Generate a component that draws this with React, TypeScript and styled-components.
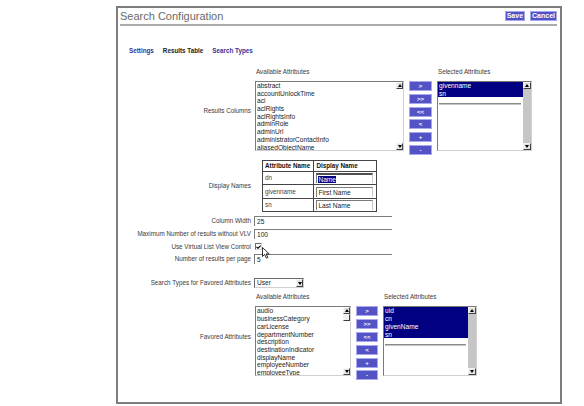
import styled, { createGlobalStyle } from "styled-components";

const GlobalStyle = createGlobalStyle`
  html, body {
    margin: 0;
    padding: 0;
    background: #fff;
  }
  body {
    font-family: "Liberation Sans", Arial, sans-serif;
    color: #333;
  }
`;

const availableColumns = [
  "abstract",
  "accountUnlockTime",
  "aci",
  "aclRights",
  "aclRightsInfo",
  "adminRole",
  "adminUrl",
  "administratorContactInfo",
  "aliasedObjectName",
];
const selectedColumns = ["givenname", "sn"];

const availableFavored = [
  "audio",
  "businessCategory",
  "carLicense",
  "departmentNumber",
  "description",
  "destinationIndicator",
  "displayName",
  "employeeNumber",
  "employeeType",
];
const selectedFavored = ["uid", "cn", "givenName", "sn"];

const displayNames = [
  { attr: "dn", name: "Name", focused: true },
  { attr: "givenname", name: "First Name" },
  { attr: "sn", name: "Last Name" },
];

const moveButtons = [">", ">>", "<<", "<", "+", "-"];

const Panel = styled.div`
  box-sizing: border-box;
  width: 446px;
  height: 398px;
  margin: 6px 0 0 116px;
  border: 2px solid #7d7d7d;
  display: flex;
  flex-direction: column;
`;

const Header = styled.div`
  display: flex;
  justify-content: space-between;
  align-items: flex-start;
  margin: 0 3px 0 2px;
  padding: 1px 0;
  border-bottom: 2px solid #ababab;
`;

const Title = styled.h1`
  margin: 0;
  font-size: 11px;
  line-height: 14px;
  font-weight: normal;
  color: #6a6a6a;
`;

const HeaderButtons = styled.div`
  display: flex;
  gap: 5px;
  margin-top: 2px;
`;

const ActionButton = styled.button`
  box-sizing: border-box;
  height: 10px;
  padding: 0 1px;
  font: bold 7px/8px "Liberation Sans", Arial, sans-serif;
  color: #fff;
  background: #5151c6;
  border: 1px solid #a6a6f2;
`;

const Tabs = styled.nav`
  display: flex;
  gap: 9px;
  margin: 21px 0 0 11px;
`;

const Tab = styled.span<{ $current?: boolean }>`
  font: bold 6.3px/8px "Liberation Sans", Arial, sans-serif;
  color: ${(p) => (p.$current ? "#222" : "#333399")};
`;

const Form = styled.div`
  display: flex;
  flex-direction: column;
`;

const Row = styled.div<{ $mt: number }>`
  display: grid;
  grid-template-columns: 133px 1fr;
  column-gap: 3px;
  margin-top: ${(p) => p.$mt}px;
`;

const Label = styled.div`
  align-self: center;
  text-align: right;
  font-size: 6.3px;
  line-height: 8px;
  color: #3a3a3a;
  white-space: nowrap;
`;

const Picker = styled.div<{ $cols: string }>`
  display: grid;
  grid-template-columns: ${(p) => p.$cols};
  grid-template-rows: 8px auto;
  column-gap: 5px;
  row-gap: 5px;
  margin-left: 1px;
  align-items: start;
`;

const Caption = styled.div`
  font-size: 6.3px;
  line-height: 8px;
  color: #3a3a3a;
  padding-left: 1px;
  white-space: nowrap;
`;

const ListBox = styled.div`
  box-sizing: border-box;
  height: 70px;
  display: flex;
  border: 1px solid;
  border-color: #7a7a7a #d0d0d0 #d0d0d0 #7a7a7a;
  background: #fff;
`;

const Options = styled.div`
  flex: 1;
  min-width: 0;
  overflow: hidden;
`;

const Option = styled.div<{ $selected?: boolean }>`
  font-size: 6.6px;
  line-height: 7.7px;
  height: 7.7px;
  padding-left: 1px;
  white-space: nowrap;
  background: ${(p) => (p.$selected ? "#000080" : "transparent")};
  color: ${(p) => (p.$selected ? "#fff" : "#222")};
`;

const Separator = styled.div`
  margin: 6px 2px 0 1px;
  border-top: 1px solid #8c8c8c;
  border-bottom: 1px solid #c4c4c4;
`;

const ScrollBar = styled.div<{ $track: string; $width: number }>`
  width: ${(p) => p.$width}px;
  display: flex;
  flex-direction: column;
  justify-content: space-between;
  background: ${(p) => p.$track};
`;

const ScrollArrow = styled.div`
  box-sizing: border-box;
  height: 7px;
  display: flex;
  align-items: center;
  justify-content: center;
  background: #e4e4e4;
  border: 1px solid;
  border-color: #f4f4f4 #404040 #404040 #f4f4f4;
`;

const Thumb = styled.div`
  box-sizing: border-box;
  height: 7px;
  background: #f0f0f0;
  border: 1px solid;
  border-color: #f4f4f4 #404040 #404040 #f4f4f4;
`;

const TrackTop = styled.div`
  display: flex;
  flex-direction: column;
`;

const MoveColumn = styled.div`
  display: flex;
  flex-direction: column;
  gap: 2.8px;
`;

const MoveButton = styled.button`
  box-sizing: border-box;
  height: 10px;
  padding: 0;
  font: bold 6px/8px "Liberation Sans", Arial, sans-serif;
  color: #fff;
  background: #5353c6;
  border: 1px solid #a8a8f0;
`;

const NamesTable = styled.table`
  border-collapse: collapse;
  margin-left: 8px;
  width: 115px;
  border: 1.5px solid #454545;
`;

const HeadCell = styled.th`
  height: 10px;
  padding: 0 2px;
  border: 1px solid #454545;
  text-align: left;
  font: bold 6.3px/8px "Liberation Sans", Arial, sans-serif;
  color: #111;
  white-space: nowrap;
`;

const Cell = styled.td`
  height: 12.5px;
  padding: 0 1px 0 2px;
  border: 1px solid #454545;
  font-size: 6.3px;
  line-height: 8px;
  color: #444;
`;

const NameInput = styled.div<{ $focused?: boolean }>`
  box-sizing: border-box;
  width: 57px;
  height: 10px;
  padding-left: 1px;
  font-size: 6.6px;
  line-height: 9px;
  color: #222;
  border-top: ${(p) => (p.$focused ? "2px solid #505050" : "1px solid #7a7a7a")};
  border-left: 1px solid #7a7a7a;
  border-right: 1px solid #c8c8c8;
  white-space: nowrap;
`;

const Highlight = styled.span`
  background: #000080;
  color: #fff;
`;

const TextField = styled.div`
  box-sizing: border-box;
  width: 138px;
  height: 10px;
  padding-left: 2px;
  font-size: 6.6px;
  line-height: 10px;
  color: #222;
  border-top: 1px solid #7d7d7d;
  border-left: 1px solid #7d7d7d;
`;

const CheckWrap = styled.div`
  position: relative;
  width: 8px;
  height: 9px;
  margin-left: 1px;
`;

const CheckBox = styled.div`
  box-sizing: border-box;
  width: 7px;
  height: 7px;
  margin-top: 1px;
  border-top: 1px solid #6a6a6a;
  border-left: 1px solid #6a6a6a;
  border-right: 1px solid #dadada;
  border-bottom: 1px solid #dadada;
  display: flex;
  align-items: center;
  justify-content: center;
`;

const Pointer = styled.svg`
  position: absolute;
  left: 7px;
  top: 5px;
`;

const Select = styled.div`
  box-sizing: border-box;
  width: 50px;
  height: 10px;
  display: flex;
  align-items: stretch;
  border-top: 1px solid #6a6a6a;
  border-left: 1px solid #6a6a6a;
  border-right: 1px solid #d0d0d0;
  border-bottom: 1px solid #d0d0d0;
`;

const SelectValue = styled.div`
  flex: 1;
  padding-left: 2px;
  font-size: 6.6px;
  line-height: 8px;
  color: #222;
`;

const DropButton = styled.div`
  box-sizing: border-box;
  width: 7px;
  display: flex;
  align-items: center;
  justify-content: center;
  background: #e4e4e4;
  border: 1px solid;
  border-color: #f4f4f4 #404040 #404040 #f4f4f4;
`;

const Glyph = ({ dir }: { dir: "up" | "down" }) => (
  <svg width="4" height="3" viewBox="0 0 4 3">
    <polygon points={dir === "up" ? "2,0 4,3 0,3" : "0,0 4,0 2,3"} fill="#000" />
  </svg>
);

type ListProps = {
  items: string[];
  selected?: boolean;
  track: string;
  barWidth: number;
  thumb?: boolean;
};

const List = ({ items, selected, track, barWidth, thumb }: ListProps) => (
  <ListBox>
    <Options>
      {items.map((item) => (
        <Option key={item} $selected={selected}>
          {item}
        </Option>
      ))}
      {selected && <Separator />}
    </Options>
    <ScrollBar $track={track} $width={barWidth}>
      <TrackTop>
        <ScrollArrow>
          <Glyph dir="up" />
        </ScrollArrow>
        {thumb && <Thumb />}
      </TrackTop>
      <ScrollArrow>
        <Glyph dir="down" />
      </ScrollArrow>
    </ScrollBar>
  </ListBox>
);

type AttributePickerProps = {
  cols: string;
  available: string[];
  selected: string[];
  thumb?: boolean;
};

const AttributePicker = ({ cols, available, selected, thumb }: AttributePickerProps) => (
  <Picker $cols={cols}>
    <Caption>Available Attributes</Caption>
    <span />
    <Caption>Selected Attributes</Caption>
    <List items={available} track="#fff" barWidth={7} thumb={thumb} />
    <MoveColumn>
      {moveButtons.map((b) => (
        <MoveButton key={b}>{b}</MoveButton>
      ))}
    </MoveColumn>
    <List items={selected} selected track="#c6c6c6" barWidth={8} />
  </Picker>
);

export default function App() {
  return (
    <>
      <GlobalStyle />
      <Panel>
        <Header>
          <Title>Search Configuration</Title>
          <HeaderButtons>
            <ActionButton>Save</ActionButton>
            <ActionButton>Cancel</ActionButton>
          </HeaderButtons>
        </Header>

        <Tabs>
          <Tab>Settings</Tab>
          <Tab $current>Results Table</Tab>
          <Tab>Search Types</Tab>
        </Tabs>

        <Form>
          <Row $mt={13}>
            <Label>Results Columns</Label>
            <AttributePicker
              cols="149px 23px 95px"
              available={availableColumns}
              selected={selectedColumns}
            />
          </Row>

          <Row $mt={5}>
            <Label>Display Names</Label>
            <div>
              <NamesTable>
                <thead>
                  <tr>
                    <HeadCell>Attribute Name</HeadCell>
                    <HeadCell>Display Name</HeadCell>
                  </tr>
                </thead>
                <tbody>
                  {displayNames.map((d) => (
                    <tr key={d.attr}>
                      <Cell>{d.attr}</Cell>
                      <Cell>
                        <NameInput $focused={d.focused}>
                          {d.focused ? <Highlight>{d.name}</Highlight> : d.name}
                        </NameInput>
                      </Cell>
                    </tr>
                  ))}
                </tbody>
              </NamesTable>
            </div>
          </Row>

          <Row $mt={4}>
            <Label>Column Width</Label>
            <TextField>25</TextField>
          </Row>
          <Row $mt={3}>
            <Label>Maximum Number of results without VLV</Label>
            <TextField>100</TextField>
          </Row>
          <Row $mt={3}>
            <Label>Use Virtual List View Control</Label>
            <CheckWrap>
              <CheckBox>
                <svg width="5" height="4" viewBox="0 0 5 4">
                  <polyline points="0.5,1.8 2,3.3 4.6,0.5" fill="none" stroke="#000" strokeWidth="1.1" />
                </svg>
              </CheckBox>
              <Pointer width="8" height="12" viewBox="0 0 8 12">
                <path
                  d="M0.5 0.5 L0.5 9.5 L2.7 7.4 L4.4 11.2 L5.9 10.5 L4.2 6.9 L7.2 6.9 Z"
                  fill="#fff"
                  stroke="#000"
                  strokeWidth="0.8"
                  strokeLinejoin="round"
                />
              </Pointer>
            </CheckWrap>
          </Row>
          <Row $mt={3}>
            <Label>Number of results per page</Label>
            <TextField>5</TextField>
          </Row>

          <Row $mt={14}>
            <Label>Search Types for Favored Attributes</Label>
            <Select>
              <SelectValue>User</SelectValue>
              <DropButton>
                <Glyph dir="down" />
              </DropButton>
            </Select>
          </Row>

          <Row $mt={5}>
            <Label>Favored Attributes</Label>
            <AttributePicker
              cols="96px 22px 94px"
              available={availableFavored}
              selected={selectedFavored}
              thumb
            />
          </Row>
        </Form>
      </Panel>
    </>
  );
}
